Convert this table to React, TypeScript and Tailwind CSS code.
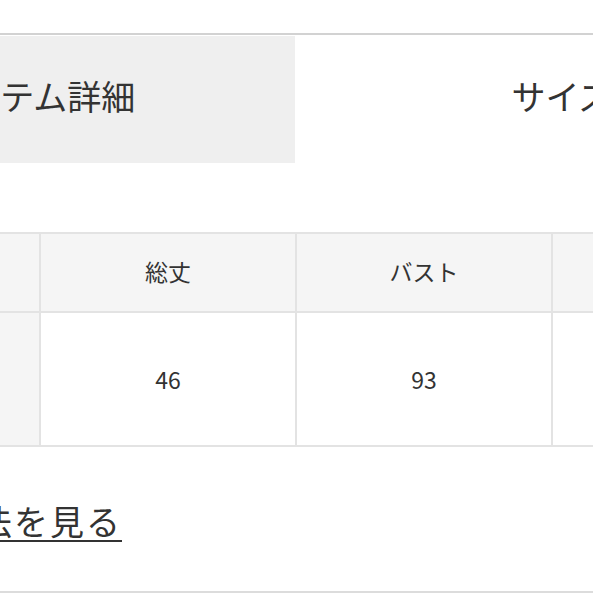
import React from 'react';

const font = { fontFamily: '"Noto Sans CJK JP", "Noto Sans", sans-serif' };

export default function App() {
  const headers = ['着丈', '総丈', 'バスト', '肩幅'];
  const values = ['52', '46', '93', '38'];

  return (
    <div className="w-[593px] h-[593px] overflow-hidden bg-white text-[#333]" style={font}>
      <div className="h-[33px]" />

      {/* Tabs */}
      <div className="ml-[-225px] w-[1100px] border-t-2 border-[#d2d2d2]">
        <div className="flex gap-[2px] pt-[1px]">
          <div className="w-[520px] h-[127px] bg-[#efefef] flex items-center justify-center text-[34px] leading-none pb-[8px]">
            アイテム詳細
          </div>
          <div className="w-[520px] h-[127px] bg-white flex items-center justify-center text-[34px] leading-none pl-[10px] pb-[8px]">
            サイズ
          </div>
        </div>
      </div>

      {/* Size table */}
      <div className="mt-[69px] ml-[-219px] w-[1100px]">
        <div className="grid grid-cols-[256px_254px_254px_256px] gap-[2px] bg-[#e3e3e3] p-[2px] w-fit">
          {headers.map((h) => (
            <div key={h} className="h-[77px] flex items-center justify-center text-[23px] bg-[#f5f5f5] pb-[2px]">
              {h}
            </div>
          ))}
          {values.map((v, i) => (
            <div key={i} className={`h-[132px] flex items-center justify-center text-[23px] ${i === 0 ? 'bg-[#f5f5f5]' : 'bg-white'}`}>
              {v}
            </div>
          ))}
        </div>
      </div>

      {/* Link */}
      <div className="mt-[55px] ml-[-130px] h-[38px] flex items-center">
        <a className="text-[34px] leading-none tracking-[2px] underline decoration-2 underline-offset-[5px] text-[#333]">
          採寸方法を見る
        </a>
      </div>

      <div className="mt-[51px] border-t-2 border-[#dcdcdc]" />
    </div>
  );
}
